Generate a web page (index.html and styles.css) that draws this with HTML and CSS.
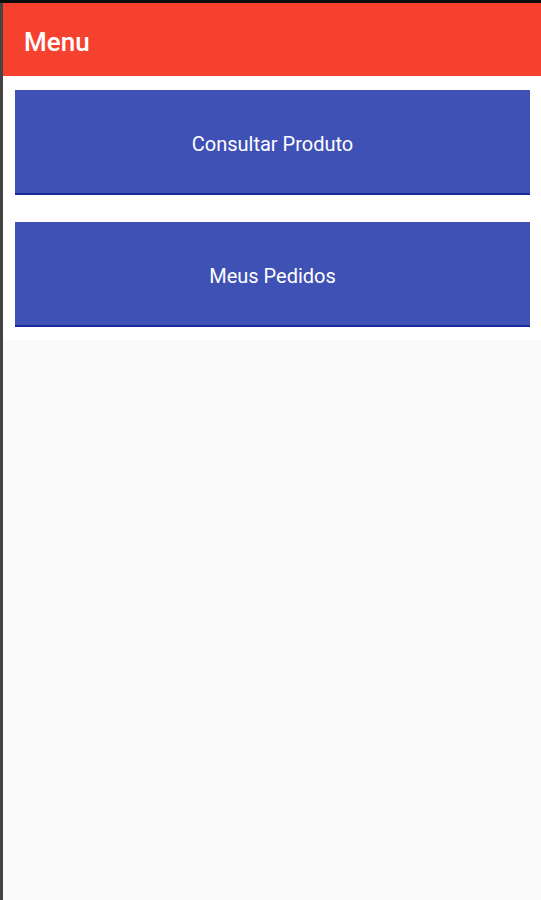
FILE: index.html
```html
<!DOCTYPE html>
<html lang="pt">
<head>
    <meta charset="UTF-8">
    <meta name="viewport" content="width=device-width, initial-scale=1.0">
    <title>Menu</title>
    <link rel="stylesheet" href="styles.css">
</head>
<body>
    <div class="screen">
        <header class="toolbar">
            <h1>Menu</h1>
        </header>
        <main class="menu">
            <button class="menu-btn">Consultar Produto</button>
            <button class="menu-btn">Meus Pedidos</button>
        </main>
    </div>
</body>
</html>
```

FILE: styles.css
```css
body {
    margin: 0;
    padding: 0;
    font-family: Roboto, "Noto Sans", Arial, sans-serif;
    background-color: #444;
    border-top: 3px solid #0d0d0d;
}

.screen {
    height: 897px;
    margin-left: 3px;
    background-color: #fafafa;
}

.toolbar {
    background-color: #f7412f;
    height: 73px;
    display: flex;
    align-items: center;
    padding: 4px 0 0 21px;
    box-sizing: border-box;
}

.toolbar h1 {
    margin: 0;
    color: #fff;
    font-size: 26px;
    font-weight: 500;
}

.menu {
    background-color: #fff;
    padding: 14px 11px 13px 12px;
    display: flex;
    flex-direction: column;
    gap: 27px;
}

.menu-btn {
    height: 105px;
    padding-top: 5px;
    background-color: #3f51b5;
    color: #fff;
    border: none;
    border-bottom: 2px solid #1a2a9c;
    font-family: inherit;
    font-size: 20px;
    cursor: pointer;
}
```
